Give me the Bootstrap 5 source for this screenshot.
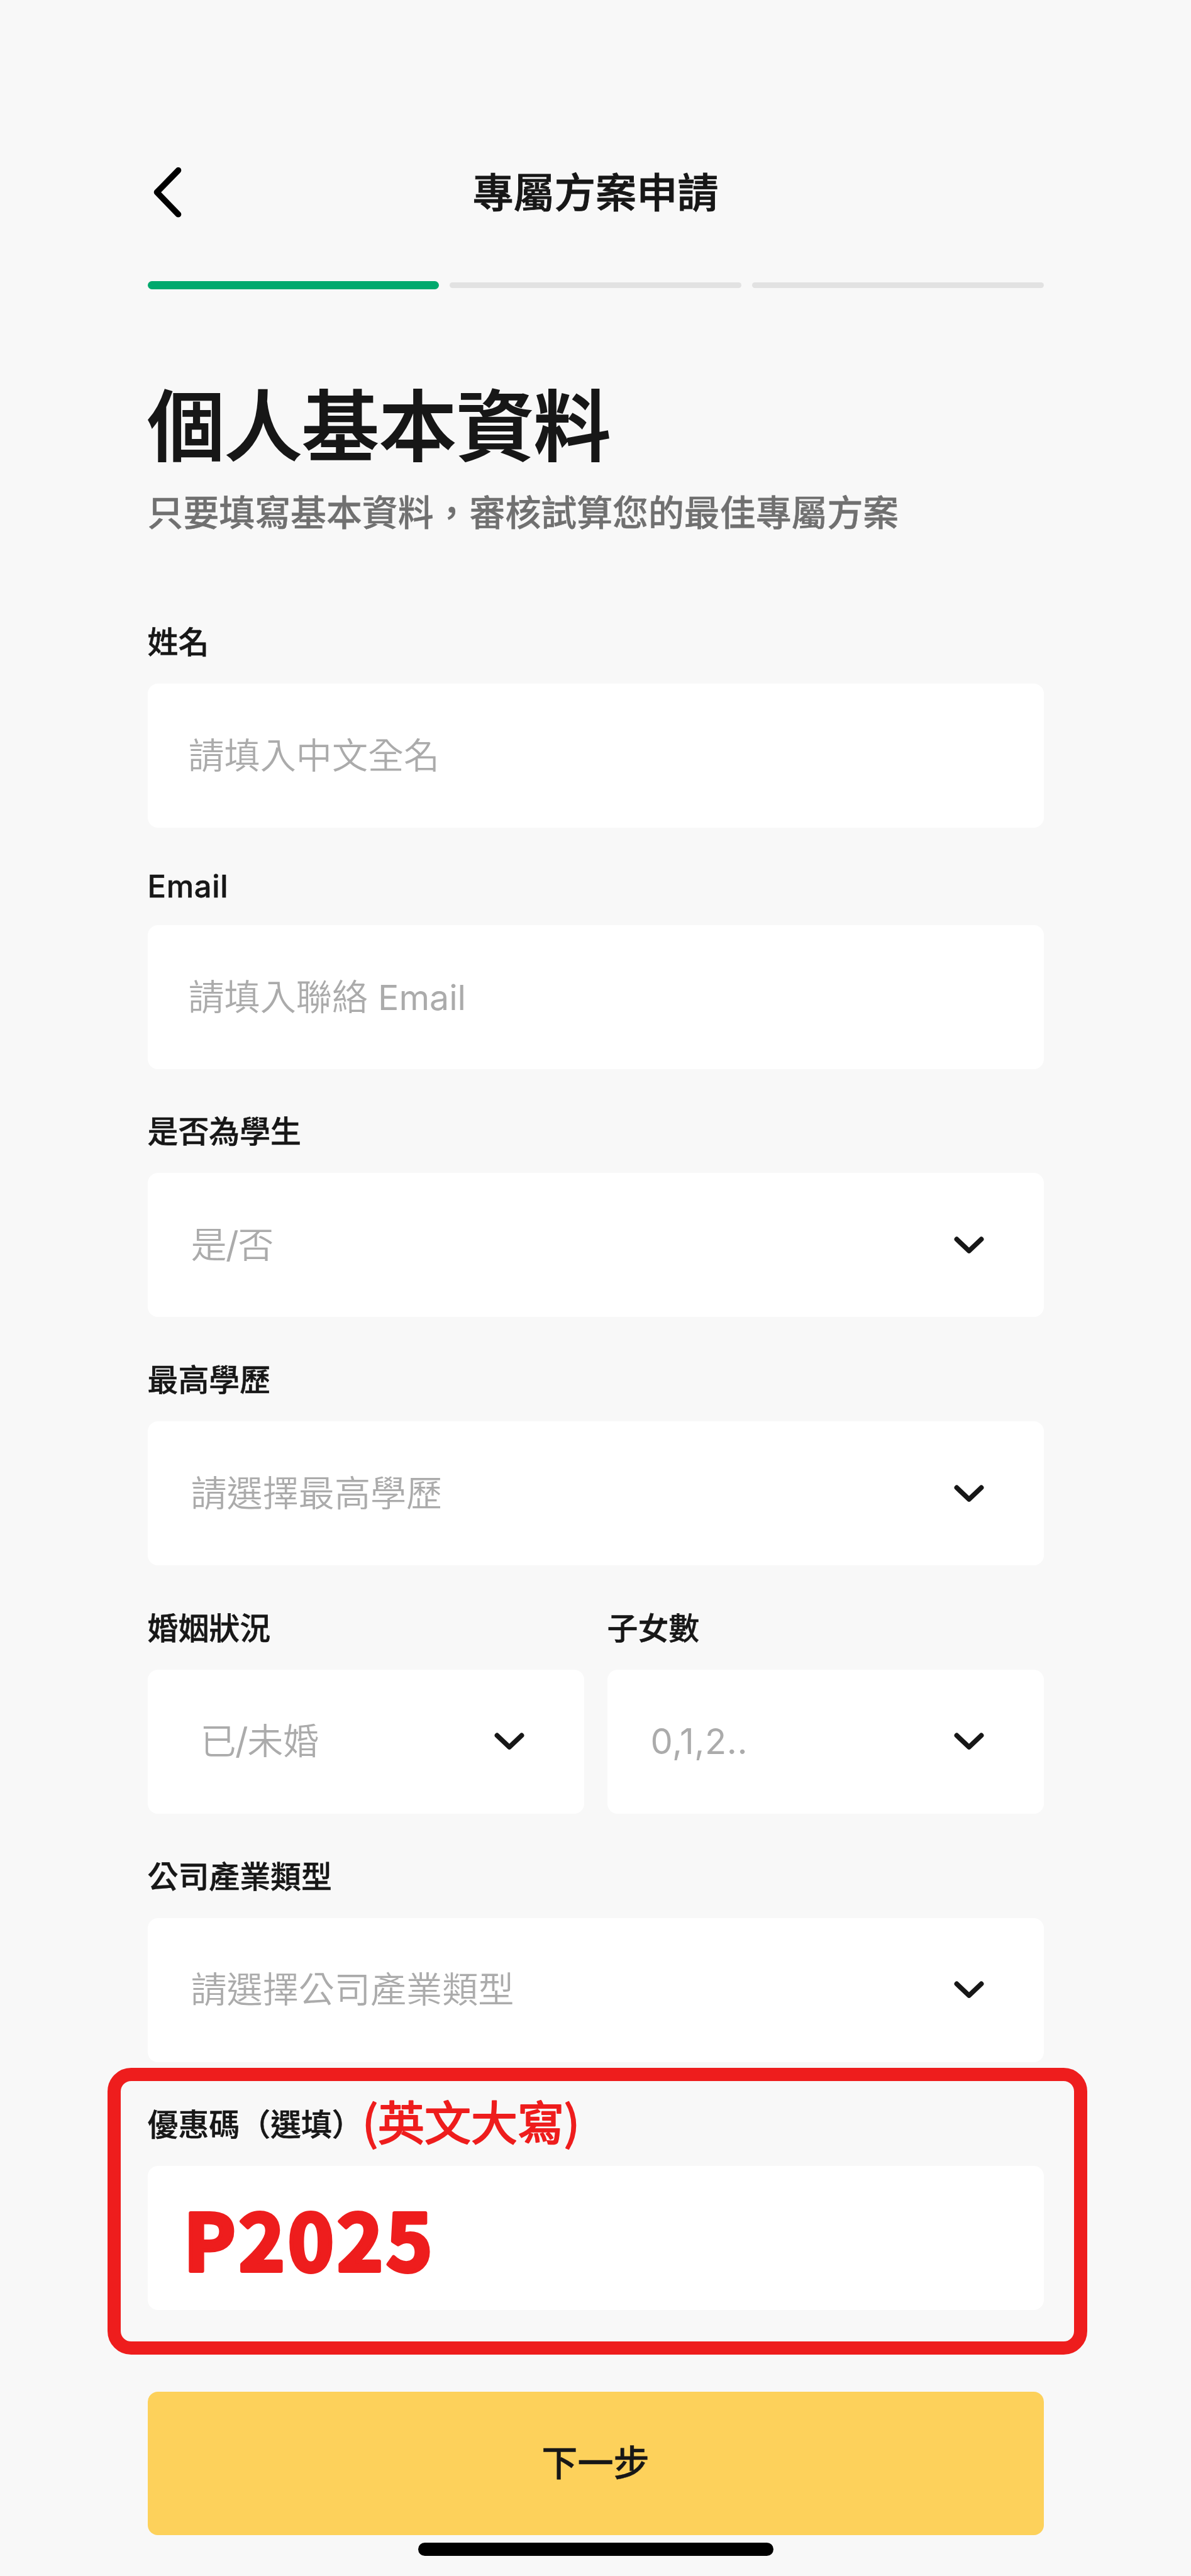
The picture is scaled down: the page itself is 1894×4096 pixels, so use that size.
<!DOCTYPE html>
<html lang="zh-Hant">
<head>
<meta charset="utf-8">
<meta name="viewport" content="width=device-width, initial-scale=1">
<title>專屬方案申請</title>
<link href="https://cdn.jsdelivr.net/npm/bootstrap@5.3.0/dist/css/bootstrap.min.css" rel="stylesheet">
<style>
  body { background: #f8f8f8; color: #171717; font-family: Inter, "Noto Sans CJK TC", sans-serif; font-weight: 500; height: 4096px; overflow: hidden; }
  .screen { width: 1425px; margin-left: 234.5px; padding-top: 247px; }
  .topbar { height: 120px; }
  .topbar .side { width: 120px; }
  .topbar .side svg { display: block; margin-left: 9px; margin-top: -2px; }
  .topbar h1 { font-size: 65.2px; line-height: 120px; font-weight: 500; -webkit-text-stroke: .9px currentColor; }
  .steps { height: 13px; margin-top: 80.3px; gap: 17.3px; }
  .steps .step { height: 9px; border-radius: 5px; background: #e2e2e2; }
  .steps .step.done { height: 13px; border-radius: 7px; background: #00a96d; }
  .headline { font-size: 122.8px; line-height: 150px; font-weight: 500; margin-top: 144px; -webkit-text-stroke: 2px currentColor; }
  .subline { font-size: 56.9px; line-height: 70px; color: #707070; margin-top: 27px; -webkit-text-stroke: .4px currentColor; }
  .fields { margin-top: 141px; }
  .field-label { font-size: 48.9px; line-height: 60px; height: 60px; margin-bottom: 35px; white-space: nowrap; -webkit-text-stroke: .5px currentColor; }
  .field-group { margin-bottom: 70.8px; }
  .field-group.first { margin-bottom: 64px; }
  .field-group.mail .field-label { margin-bottom: 31px; letter-spacing: .7px; }
  .field-group.mail { margin-bottom: 70px; }
  .input-box { height: 229px; border-radius: 16px; background: #fff; color: #ababab; font-size: 57.1px; line-height: 80px; font-weight: 350; padding-left: 65px; padding-right: 94.5px; white-space: nowrap; }
  .input-box.pick { padding-left: 69px; }
  .input-box.pick.wide { padding-left: 84px; }
  .latin { font-weight: 400; font-size: 55.5px; }
  .slash { margin: 0 -1.5px; font-weight: 400; }
  .digits { letter-spacing: .6px; font-weight: 400; font-size: 56px; }
  .pair { gap: 37px; }
  .promo-frame { position: absolute; left: -63.7px; right: -69.5px; top: -61.5px; bottom: -70.5px; border: 21.6px solid #ee1d1d; border-radius: 37.6px; pointer-events: none; }
  .hint { width: 350px; height: 60px; overflow: visible; margin-left: 3px; -webkit-text-stroke: 0; }
  .code { width: 420px; height: 229px; overflow: visible; }
  .red-text { font-family: "Noto Sans CJK TC", sans-serif; fill: #ee1d1d; stroke: #ee1d1d; stroke-linejoin: round; stroke-linecap: round; }
  .btn-next { height: 228px; margin-top: 129.6px; border: 0; border-radius: 16px; background: #fdd15b; color: #171717; font-size: 57.2px; font-weight: 500; line-height: 80px; -webkit-text-stroke: .4px currentColor; }
  .home-bar { width: 565px; height: 21.6px; border-radius: 11px; background: #000; margin-top: 11.6px; }
</style>
</head>
<body>
<svg width="0" height="0" class="position-absolute">
  <symbol id="chev" viewBox="0 0 48 28"><path d="M4.5 4.5 24 23 43.5 4.5" fill="none" stroke="#171717" stroke-width="7.8" stroke-linecap="round" stroke-linejoin="round"/></symbol>
</svg>
<main class="screen">
  <header class="topbar d-flex align-items-center justify-content-between">
    <div class="side"><svg width="46" height="80" viewBox="0 0 46 80"><path d="M39.5 4.8 5.5 39.7 39.5 74.8" fill="none" stroke="#000" stroke-width="9.6" stroke-linecap="round" stroke-linejoin="round"/></svg></div>
    <h1 class="m-0 text-center">專屬方案申請</h1>
    <div class="side"></div>
  </header>
  <div class="steps d-flex align-items-center">
    <div class="step done flex-fill"></div><div class="step flex-fill"></div><div class="step flex-fill"></div>
  </div>
  <h2 class="headline mb-0">個人基本資料</h2>
  <p class="subline mb-0">只要填寫基本資料，審核試算您的最佳專屬方案</p>

  <form class="fields">
    <div class="field-group first">
      <div class="field-label">姓名</div>
      <div class="input-box d-flex align-items-center">請填入中文全名</div>
    </div>
    <div class="field-group mail">
      <div class="field-label">Email</div>
      <div class="input-box d-flex align-items-center"><span>請填入聯絡 <span class="latin">Email</span></span></div>
    </div>
    <div class="field-group">
      <div class="field-label">是否為學生</div>
      <div class="input-box pick d-flex align-items-center justify-content-between"><span>是<span class="slash">/</span>否</span><svg width="48" height="28"><use href="#chev"/></svg></div>
    </div>
    <div class="field-group">
      <div class="field-label">最高學歷</div>
      <div class="input-box pick d-flex align-items-center justify-content-between">請選擇最高學歷<svg width="48" height="28"><use href="#chev"/></svg></div>
    </div>
    <div class="field-group pair d-flex">
      <div class="flex-fill w-50">
        <div class="field-label">婚姻狀況</div>
        <div class="input-box pick wide d-flex align-items-center justify-content-between"><span>已<span class="slash">/</span>未婚</span><svg width="48" height="28"><use href="#chev"/></svg></div>
      </div>
      <div class="flex-fill w-50">
        <div class="field-label">子女數</div>
        <div class="input-box pick d-flex align-items-center justify-content-between"><span class="digits">0,1,2..</span><svg width="48" height="28"><use href="#chev"/></svg></div>
      </div>
    </div>
    <div class="field-group">
      <div class="field-label">公司產業類型</div>
      <div class="input-box pick d-flex align-items-center justify-content-between">請選擇公司產業類型<svg width="48" height="28"><use href="#chev"/></svg></div>
    </div>
    <div class="field-group mb-0 position-relative">
      <div class="field-label d-flex">優惠碼（選填）<svg class="hint"><text class="red-text" x="-4" y="54" font-size="74" font-weight="400" stroke-width="2.2">(英文大寫)</text></svg></div>
      <div class="input-box"><svg class="code"><text class="red-text" x="-8" y="167" font-size="124" font-weight="700" stroke-width="6" letter-spacing="5">P2025</text></svg></div>
      <div class="promo-frame"></div>
    </div>
    <button type="button" class="btn btn-next w-100 d-flex align-items-center justify-content-center">下一步</button>
  </form>
  <div class="home-bar mx-auto"></div>
</main>
<script src="https://cdn.jsdelivr.net/npm/bootstrap@5.3.0/dist/js/bootstrap.bundle.min.js"></script>
</body>
</html>
